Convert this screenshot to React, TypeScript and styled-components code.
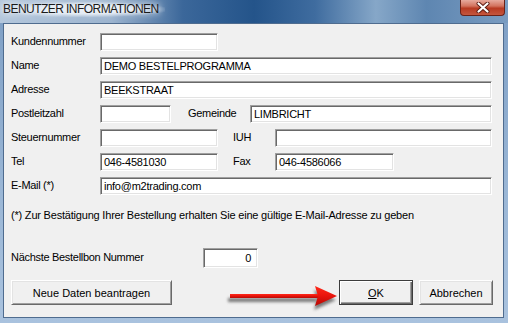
import React from 'react'
import styled, { createGlobalStyle } from 'styled-components'

const GlobalStyle = createGlobalStyle`
  html, body {
    margin: 0;
    padding: 0;
    background: #ffffff;
  }
`

const Window = styled.div`
  width: 508px;
  height: 323px;
  display: flex;
  flex-direction: column;
  background: linear-gradient(to bottom, #7d9ec4 0%, #9bb7d6 60%, #a9c2de 100%);
  box-sizing: border-box;
  font-family: 'Liberation Sans', Arial, sans-serif;
`

const TitleBar = styled.div`
  height: 23px;
  display: flex;
  align-items: flex-start;
  justify-content: space-between;
  background: linear-gradient(
    to right,
    #b4c7dc 0%,
    #9cb4cf 22%,
    #3b679a 36%,
    #24548a 50%,
    #3f6c9f 62%,
    #86a7c8 74%,
    #5e86b1 84%,
    #7a9cc1 100%
  );
`

const Title = styled.span`
  margin: 2px 0 0 2px;
  padding: 0 6px 0 1px;
  font-size: 12px;
  letter-spacing: -0.55px;
  line-height: 15px;
  color: #1b1b1b;
  background: radial-gradient(ellipse at center, rgba(225, 234, 244, 0.95) 40%, rgba(225, 234, 244, 0) 75%);
  text-shadow: 0 0 6px #ffffff, 0 0 10px #ffffff;
`

const CloseButton = styled.div`
  width: 45px;
  height: 16px;
  margin-right: 3px;
  box-sizing: border-box;
  border: 1px solid #6b2218;
  border-top: none;
  border-radius: 0 0 4px 4px;
  background: linear-gradient(to bottom, #e7aa9e 0%, #d3735f 40%, #b83a22 55%, #c4563e 100%);
  display: flex;
  align-items: center;
  justify-content: center;
`

const Client = styled.div`
  flex: 1;
  margin: 0 4px 5px 3px;
  border: 1px solid #4f6c8f;
  background: #f0f0f0;
  padding: 9px 0 0 7px;
  display: flex;
  flex-direction: column;
`

const Row = styled.div`
  display: flex;
  align-items: center;
  height: 18px;
  margin-bottom: 6px;
`

const Label = styled.span<{ $w: number; $ml?: number }>`
  width: ${(p) => p.$w}px;
  margin-left: ${(p) => p.$ml || 0}px;
  font-size: 11px;
  letter-spacing: -0.3px;
  color: #000;
  white-space: nowrap;
  position: relative;
  top: -1px;
`

const Field = styled.div<{ $w: number; $h?: number; $right?: boolean }>`
  width: ${(p) => p.$w}px;
  height: ${(p) => p.$h || 18}px;
  box-sizing: border-box;
  background: #ffffff;
  border-top: 1px solid #a0a0a0;
  border-left: 1px solid #a0a0a0;
  border-right: 1px solid #ffffff;
  border-bottom: 1px solid #ffffff;
  box-shadow: inset 1px 1px 0 #696969, inset -1px -1px 0 #e3e3e3;
  padding: ${(p) => (p.$right ? '0 6px 0 0' : '0 0 0 3px')};
  display: flex;
  align-items: center;
  justify-content: ${(p) => (p.$right ? 'flex-end' : 'flex-start')};
  font-size: 11px;
  letter-spacing: -0.25px;
  color: #000;
  white-space: nowrap;
  overflow: hidden;
`

const Note = styled.div`
  margin-top: 8px;
  font-size: 11px;
  letter-spacing: -0.2px;
  color: #000;
  white-space: nowrap;
`

const NumberRow = styled.div`
  display: flex;
  align-items: center;
  margin-top: 27px;
  height: 20px;
`

const ButtonRow = styled.div`
  display: flex;
  align-items: flex-start;
  margin-top: 12px;
  height: 25px;
`

const Button = styled.div<{ $w: number; $default?: boolean; $ml?: number }>`
  width: ${(p) => p.$w}px;
  height: 25px;
  margin-left: ${(p) => p.$ml || 0}px;
  box-sizing: border-box;
  background: #f0f0f0;
  border-top: 1px solid ${(p) => (p.$default ? '#3c3c3c' : '#ffffff')};
  border-left: 1px solid ${(p) => (p.$default ? '#3c3c3c' : '#ffffff')};
  border-right: 1px solid ${(p) => (p.$default ? '#3c3c3c' : '#696969')};
  border-bottom: 1px solid ${(p) => (p.$default ? '#3c3c3c' : '#696969')};
  box-shadow: ${(p) =>
    p.$default
      ? 'inset 1px 1px 0 #ffffff, inset -1px -1px 0 #696969, inset -2px -2px 0 #a0a0a0'
      : 'inset 1px 1px 0 #e3e3e3, inset -1px -1px 0 #a0a0a0'};
  display: flex;
  align-items: center;
  justify-content: center;
  font-size: 11px;
  letter-spacing: 0;
  color: #000;
`

const Mnemonic = styled.span`
  text-decoration: underline;
`

const ArrowWrap = styled.div`
  margin-left: 58px;
  width: 109px;
  height: 25px;
`

const Arrow = () => (
  <svg width="109" height="25" viewBox="0 0 109 25" style={{ overflow: 'visible' }}>
    <defs>
      <filter id="blur" x="-10%" y="-50%" width="120%" height="200%">
        <feGaussianBlur stdDeviation="1.6" />
      </filter>
      <linearGradient id="red" x1="0" y1="0" x2="0" y2="1">
        <stop offset="0" stopColor="#ff2a1a" />
        <stop offset="0.5" stopColor="#e8140c" />
        <stop offset="1" stopColor="#b50a05" />
      </linearGradient>
    </defs>
    <g filter="url(#blur)" fill="#5c5c5c" opacity="0.8" transform="translate(-2 4)">
      <rect x="0" y="14" width="88" height="4" />
      <path d="M86 6 L108 16 L86 26 L89 16 Z" />
    </g>
    <rect x="0" y="14" width="88" height="4" fill="url(#red)" />
    <path d="M85 6 L107 16 L85 26 L88 16 Z" fill="url(#red)" />
  </svg>
)

const CloseIcon = () => (
  <svg width="14" height="11" viewBox="0 0 14 11">
    <path d="M2.5 1.5 L11.5 9.5 M11.5 1.5 L2.5 9.5" stroke="#5a1a12" strokeWidth="4" strokeLinecap="round" />
    <path d="M2.5 1.5 L11.5 9.5 M11.5 1.5 L2.5 9.5" stroke="#ffffff" strokeWidth="2.2" strokeLinecap="round" />
  </svg>
)

const App = () => {
  return (
    <>
      <GlobalStyle />
      <Window>
        <TitleBar>
          <Title>BENUTZER INFORMATIONEN</Title>
          <CloseButton>
            <CloseIcon />
          </CloseButton>
        </TitleBar>
        <Client>
          <Row>
            <Label $w={89}>Kundennummer</Label>
            <Field $w={118} />
          </Row>
          <Row>
            <Label $w={89}>Name</Label>
            <Field $w={392}>DEMO BESTELPROGRAMMA</Field>
          </Row>
          <Row>
            <Label $w={89}>Adresse</Label>
            <Field $w={392}>BEEKSTRAAT</Field>
          </Row>
          <Row>
            <Label $w={89}>Postleitzahl</Label>
            <Field $w={71} />
            <Label $w={62} $ml={17}>Gemeinde</Label>
            <Field $w={242}>LIMBRICHT</Field>
          </Row>
          <Row>
            <Label $w={89}>Steuernummer</Label>
            <Field $w={118} />
            <Label $w={42} $ml={15}>IUH</Label>
            <Field $w={217} />
          </Row>
          <Row>
            <Label $w={89}>Tel</Label>
            <Field $w={118}>046-4581030</Field>
            <Label $w={42} $ml={15}>Fax</Label>
            <Field $w={119}>046-4586066</Field>
          </Row>
          <Row>
            <Label $w={89}>E-Mail (*)</Label>
            <Field $w={392}>info@m2trading.com</Field>
          </Row>
          <Note>(*) Zur Bestätigung Ihrer Bestellung erhalten Sie eine gültige E-Mail-Adresse zu geben</Note>
          <NumberRow>
            <Label $w={192}>Nächste Bestellbon Nummer</Label>
            <Field $w={55} $h={20} $right>
              0
            </Field>
          </NumberRow>
          <ButtonRow>
            <Button $w={161}>Neue Daten beantragen</Button>
            <ArrowWrap>
              <Arrow />
            </ArrowWrap>
            <Button $w={74} $default>
              <Mnemonic>O</Mnemonic>K
            </Button>
            <Button $w={74} $ml={6}>
              Abbrechen
            </Button>
          </ButtonRow>
        </Client>
      </Window>
    </>
  )
}

export default App
